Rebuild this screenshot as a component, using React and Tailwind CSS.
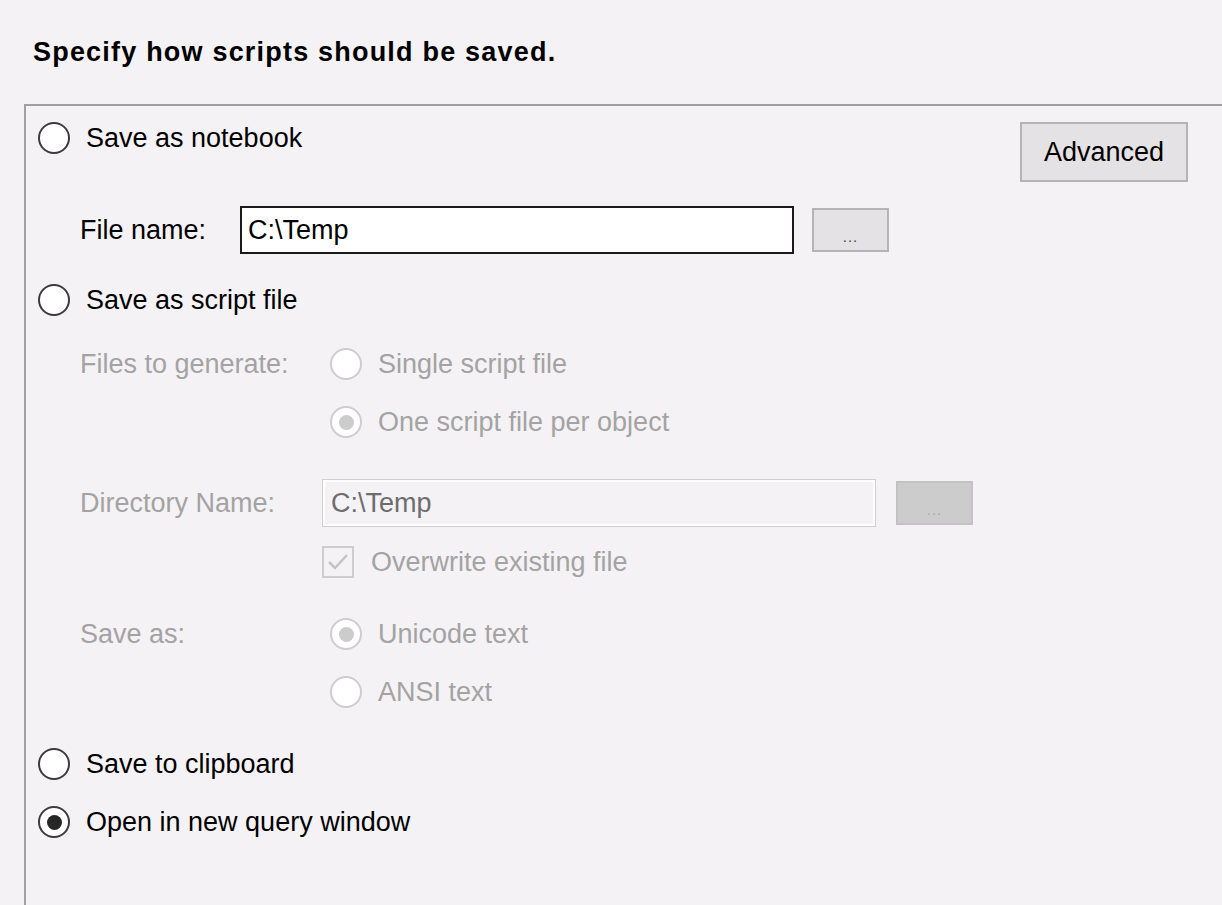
import React from 'react'

const font = { fontFamily: '"Liberation Sans", Arial, sans-serif' }

function Radio({ label, checked, disabled }) {
  return (
    <div className="flex items-center gap-[16px] h-[32px]">
      <div
        className={`w-[32px] h-[32px] rounded-full border-2 bg-white flex items-center justify-center ${
          disabled ? 'border-[#cdcdcd]' : 'border-[#3c3c3c]'
        }`}
      >
        {checked && (
          <div className={`w-[15px] h-[15px] rounded-full ${disabled ? 'bg-[#cccccc]' : 'bg-[#262626]'}`} />
        )}
      </div>
      <span className={`text-[27px] leading-[32px] ${disabled ? 'text-[#a3a3a3]' : 'text-black'}`}>{label}</span>
    </div>
  )
}

function DotsButton({ disabled }) {
  return (
    <div
      className={`w-[77px] h-[44px] border-2 flex items-end justify-center pb-[6px] ${
        disabled ? 'bg-[#cccccc] border-[#c2c2c2]' : 'bg-[#e5e2e5] border-[#b4b4b4]'
      }`}
    >
      <span className={`text-[15px] leading-[15px] tracking-[1px] ${disabled ? 'text-[#a9a9a9]' : 'text-[#444]'}`}>...</span>
    </div>
  )
}

export default function App() {
  return (
    <div className="w-[1222px] h-[905px] bg-[#f5f2f5] overflow-hidden flex flex-col" style={font}>
      <div className="pt-[36px] pl-[33px] text-[27px] leading-[32px] font-bold tracking-[1.2px] text-black">
        Specify how scripts should be saved.
      </div>

      <div className="mt-[36px] ml-[24px] flex-1 border-t-2 border-l-2 border-[#a0a0a0] pl-[12px] flex flex-col">
        {/* notebook + advanced */}
        <div className="pt-[16px] pr-[34px] flex justify-between items-start">
          <Radio label="Save as notebook" />
          <div className="w-[168px] h-[60px] bg-[#e5e2e5] border-2 border-[#b4b4b4] flex items-center justify-center text-[27px] text-black">
            Advanced
          </div>
        </div>

        <div className="mt-[24px] pl-[42px] flex items-center">
          <span className="w-[160px] text-[27px] leading-[32px] text-black">File name:</span>
          <div className="w-[554px] h-[48px] bg-white border-2 border-[#1a1a1a] flex items-center pl-[6px] text-[27px] text-black">
            C:\Temp
          </div>
          <div className="ml-[18px]">
            <DotsButton />
          </div>
        </div>

        <div className="mt-[30px]">
          <Radio label="Save as script file" />
        </div>

        <div className="mt-[32px] pl-[42px] flex items-start">
          <span className="w-[250px] text-[27px] leading-[32px] text-[#a3a3a3]">Files to generate:</span>
          <div className="flex flex-col gap-[26px]">
            <Radio label="Single script file" disabled />
            <Radio label="One script file per object" checked disabled />
          </div>
        </div>

        <div className="mt-[41px] pl-[42px] flex items-center">
          <span className="w-[242px] text-[27px] leading-[32px] text-[#a3a3a3]">Directory Name:</span>
          <div className="w-[554px] h-[48px] border border-[#cfcfcf] shadow-[inset_0_0_0_2px_#ffffff] flex items-center pl-[8px] text-[27px] text-[#6d6d6d]">
            C:\Temp
          </div>
          <div className="ml-[20px]">
            <DotsButton disabled />
          </div>
        </div>

        <div className="mt-[19px] pl-[284px] flex items-center gap-[17px]">
          <div className="w-[32px] h-[32px] border-2 border-[#cdcdcd] flex items-center justify-center">
            <svg width="22" height="18" viewBox="0 0 22 18">
              <path d="M2 9 L8 15 L20 2" fill="none" stroke="#c4c4c4" strokeWidth="2.5" />
            </svg>
          </div>
          <span className="text-[27px] leading-[32px] text-[#a3a3a3]">Overwrite existing file</span>
        </div>

        <div className="mt-[40px] pl-[42px] flex items-start">
          <span className="w-[250px] text-[27px] leading-[32px] text-[#a3a3a3]">Save as:</span>
          <div className="flex flex-col gap-[26px]">
            <Radio label="Unicode text" checked disabled />
            <Radio label="ANSI text" disabled />
          </div>
        </div>

        <div className="mt-[40px] flex flex-col gap-[26px]">
          <Radio label="Save to clipboard" />
          <Radio label="Open in new query window" checked />
        </div>
      </div>
    </div>
  )
}
